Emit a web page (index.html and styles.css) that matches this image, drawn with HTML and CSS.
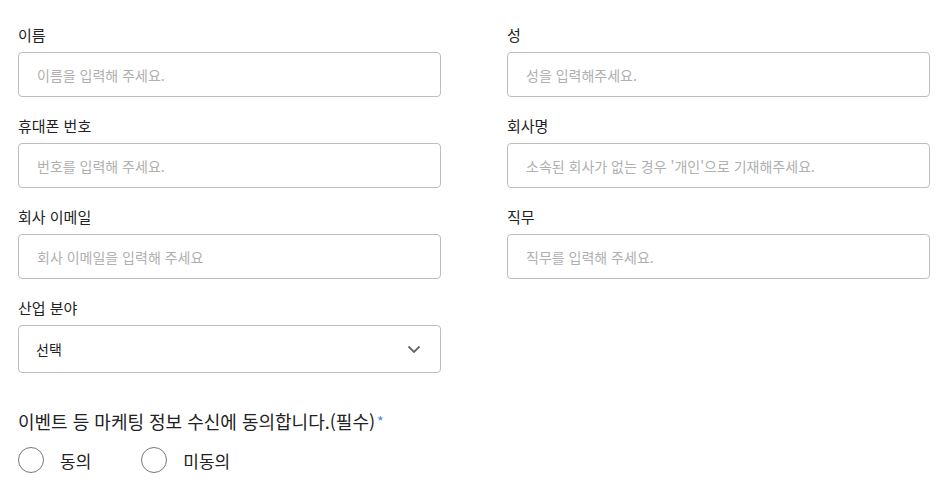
FILE: index.html
```html
<!DOCTYPE html>
<html lang="ko">
<head>
<meta charset="utf-8">
<link rel="stylesheet" href="styles.css">
</head>
<body>
<form class="form">
  <div class="grid">
    <div class="field">
      <label class="label">이름</label>
      <input class="input" type="text" placeholder="이름을 입력해 주세요.">
    </div>
    <div class="field">
      <label class="label">성</label>
      <input class="input" type="text" placeholder="성을 입력해주세요.">
    </div>
    <div class="field">
      <label class="label">휴대폰 번호</label>
      <input class="input" type="text" placeholder="번호를 입력해 주세요.">
    </div>
    <div class="field">
      <label class="label">회사명</label>
      <input class="input" type="text" placeholder="소속된 회사가 없는 경우 '개인'으로 기재해주세요.">
    </div>
    <div class="field">
      <label class="label">회사 이메일</label>
      <input class="input" type="text" placeholder="회사 이메일을 입력해 주세요">
    </div>
    <div class="field">
      <label class="label">직무</label>
      <input class="input" type="text" placeholder="직무를 입력해 주세요.">
    </div>
    <div class="field">
      <label class="label">산업 분야</label>
      <div class="select">
        <span>선택</span>
        <svg class="chev" width="14" height="9" viewBox="0 0 14 9"><path d="M1.5 1.5 L7 7 L12.5 1.5" fill="none" stroke="#666" stroke-width="1.8"/></svg>
      </div>
    </div>
  </div>
  <div class="consent">
    <p class="question">이벤트 등 마케팅 정보 수신에 동의합니다.(필수)<span class="req">*</span></p>
    <div class="radios">
      <label class="radio"><span class="circle"></span><span>동의</span></label>
      <label class="radio"><span class="circle"></span><span>미동의</span></label>
    </div>
  </div>
</form>
</body>
</html>
```
FILE: styles.css
```css
* { box-sizing: border-box; }
body {
  margin: 0;
  background: #fff;
  font-family: "Noto Sans CJK KR", "Noto Sans", sans-serif;
  color: #222;
}
.form {
  padding: 24px 20px 0 18px;
}
.grid {
  display: grid;
  grid-template-columns: 423px 423px;
  column-gap: 66px;
  row-gap: 18px;
}
.field {
  display: flex;
  flex-direction: column;
}
.label {
  font-size: 15px;
  line-height: 22px;
  margin-bottom: 6px;
  color: #222;
}
.input {
  height: 45px;
  border: 1px solid #bdbdbd;
  border-radius: 4px;
  padding: 0 18px;
  font-family: inherit;
  font-size: 14px;
  color: #222;
  outline: none;
}
.input::placeholder {
  color: #b0b0b0;
}
.select {
  height: 48px;
  border: 1px solid #bdbdbd;
  border-radius: 4px;
  padding: 0 19px 0 17px;
  display: flex;
  align-items: center;
  justify-content: space-between;
  font-size: 14px;
  color: #222;
}
.chev { display: block; }
.consent {
  margin-top: 35px;
}
.question {
  margin: 0;
  font-size: 18px;
  line-height: 26px;
  color: #222;
}
.req {
  color: #3b8ef0;
  font-size: 14px;
  vertical-align: top;
  margin-left: 2px;
}
.radios {
  display: flex;
  gap: 50px;
  margin-top: 13px;
}
.radio {
  display: flex;
  align-items: center;
  gap: 16px;
  font-size: 17px;
  color: #222;
}
.circle {
  width: 26px;
  height: 26px;
  border: 1px solid #777;
  border-radius: 50%;
}
```
